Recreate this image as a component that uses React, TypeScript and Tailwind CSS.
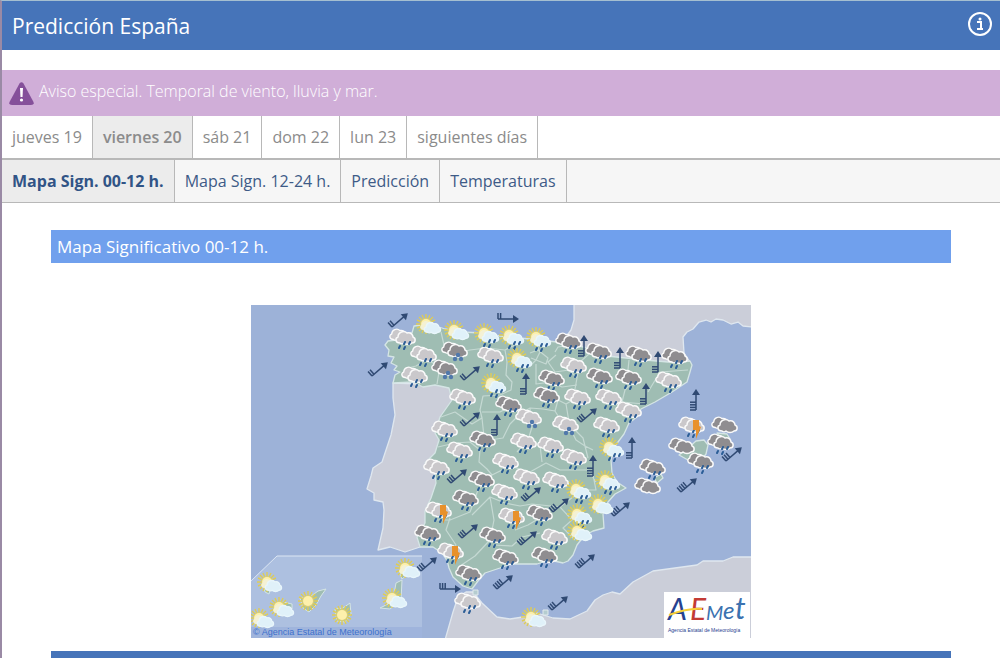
import React from 'react';
import { clsx } from 'clsx';

const DAYS = ['jueves 19', 'viernes 20', 'sáb 21', 'dom 22', 'lun 23', 'siguientes días'];
const VIEWS = ['Mapa Sign. 00-12 h.', 'Mapa Sign. 12-24 h.', 'Predicción', 'Temperaturas'];

type Kind = 'rain' | 'darkRain' | 'sunRain' | 'sunCloud' | 'dark' | 'snow' | 'darkSnow' | 'storm' | 'sun';

// x, y are the centre of the cloud
const SYMBOLS: [Kind, number, number][] = [
  ['rain', 402, 337], ['rain', 423, 354], ['rain', 414, 375], ['rain', 490, 355], ['rain', 573, 365],
  ['rain', 668, 380], ['rain', 462, 397], ['rain', 577, 397], ['rain', 608, 397], ['rain', 628, 410],
  ['rain', 606, 425], ['rain', 444, 429], ['rain', 459, 450], ['rain', 523, 441], ['rain', 550, 445],
  ['rain', 573, 457], ['rain', 505, 461], ['rain', 436, 467], ['rain', 526, 477], ['rain', 555, 480],
  ['rain', 504, 492], ['rain', 554, 537], ['rain', 467, 601],
  ['darkRain', 568, 341], ['darkRain', 598, 351], ['darkRain', 638, 354], ['darkRain', 674, 356],
  ['darkRain', 551, 378], ['darkRain', 599, 376], ['darkRain', 628, 377], ['darkRain', 508, 404],
  ['darkRain', 546, 395], ['darkRain', 482, 439], ['darkRain', 720, 442], ['darkRain', 700, 461],
  ['darkRain', 652, 467], ['darkRain', 481, 479], ['darkRain', 465, 498], ['darkRain', 539, 513],
  ['darkRain', 427, 533], ['darkRain', 492, 535], ['darkRain', 505, 557], ['darkRain', 544, 555],
  ['darkRain', 468, 573],
  ['sunRain', 487, 335], ['sunRain', 512, 337], ['sunRain', 539, 339], ['sunRain', 520, 360],
  ['sunRain', 494, 385], ['sunRain', 612, 449], ['sunRain', 579, 491], ['sunRain', 608, 482],
  ['sunRain', 580, 516],
  ['sunCloud', 429, 326], ['sunCloud', 457, 332], ['sunCloud', 601, 506], ['sunCloud', 580, 533],
  ['sunCloud', 534, 619], ['sunCloud', 270, 584], ['sunCloud', 282, 609], ['sunCloud', 262, 620],
  ['sunCloud', 408, 570], ['sunCloud', 395, 600],
  ['dark', 724, 425], ['dark', 681, 446], ['dark', 647, 486],
  ['snow', 528, 417], ['snow', 565, 424], ['darkSnow', 454, 350], ['darkSnow', 444, 368],
  ['storm', 691, 425], ['storm', 438, 510], ['storm', 511, 516], ['storm', 450, 551],
  ['sun', 308, 601], ['sun', 342, 615],
];

// tail x, tail y, rotation, number of barbs
const WINDS: [number, number, number, number][] = [
  [392, 327, -41, 2], [372, 376, -41, 2], [464, 380, -41, 2], [464, 426, -41, 2], [581, 422, -41, 3],
  [451, 483, -41, 3], [525, 501, -41, 3], [553, 512, -41, 3], [462, 538, -41, 3], [521, 545, -41, 3],
  [421, 571, -41, 3], [497, 589, -41, 4], [552, 610, -41, 3], [579, 568, -41, 4], [614, 516, -41, 4],
  [681, 492, -41, 4], [726, 461, -41, 3],
  [526, 394, -90, 3], [497, 435, -90, 3], [584, 356, -90, 3], [620, 368, -90, 3], [658, 372, -90, 3],
  [646, 404, -90, 3], [696, 410, -90, 4], [632, 458, -90, 3], [593, 476, -90, 4],
  [498, 319, 0, 2], [440, 589, 0, 3],
];

const REGIONS = [
  'M408 368 416 366 426 360 440 366 437 384M441 332 444 345 449 352 457 353 470 350 486 348 505 350 513 346 519 339',
  'M505 350 507 362 506 375 512 382 511 390 500 395 483 396 480 410 482 418 472 424 455 412 441 417',
  'M482 412 500 412 513 405M482 418 484 437 490 440 503 438 510 424 520 414 530 408 543 409 555 411 558 400 566 404 573 400 577 378 569 370 555 372 548 362 556 355',
  'M535 342 540 352 536 360 530 366M530 353 538 350 548 358 546 364 531 358M536 364V384L551 382 562 387 577 385',
  'M555 352 558 347 572 345M577 378 580 362 589 354M629 360 628 370 634 381 625 390 622 402 630 418',
  'M622 402 644 404M648 392 660 372 688 370M530 408 532 427 528 440 517 452',
  'M566 404 570 428 576 440 585 446 593 450M555 411 563 424 575 430 583 438 588 458',
  'M438 447 455 443 470 442 480 450 479 462 487 469 492 475 478 490 470 512 450 520 436 520',
  'M492 475 510 466 530 472 546 463 560 470 588 470 596 482M540 445 542 462',
  'M450 518 446 530 456 545 446 560M472 515 490 497 505 503 520 506 532 504 560 507 572 520 563 528 575 540',
  'M490 497 494 520 490 540 475 556 460 566M515 530 528 525 543 516M560 507 582 490 596 490 592 470',
  'M493 545 512 546 522 537 540 533M418 387 425 373',
];

function Cloud({ fill, stroke = '#fafafa' }: { fill: string; stroke?: string }) {
  return (
    <path
      d="M-5 5C-10 5-10 0-7-1-7-6-1-8 2-5 6-6 8-3 8-1 11 0 11 5 7 5 5 7 1 7-1 5-2 6-4 6-5 5z"
      fill={fill}
      stroke={stroke}
      strokeWidth="1.5"
      strokeLinejoin="round"
    />
  );
}

function Sun() {
  return (
    <g>
      <path
        d="M0-10V10M-10 0H10M-7-7 7 7M7-7-7 7M-4-9 4 9M4-9-4 9M-9-4 9 4M-9 4 9-4"
        stroke="#dfcc55"
        strokeWidth="1.4"
      />
      <circle r="6" fill="#d5cd7c" />
      <circle r="5" fill="#fdf0ac" />
    </g>
  );
}

function WeatherSymbol({ kind, x, y }: { kind: Kind; x: number; y: number }) {
  const sunny = kind === 'sunCloud' || kind === 'sunRain';
  const dark = kind === 'dark' || kind === 'darkRain' || kind === 'darkSnow';
  const wet = kind === 'rain' || kind === 'darkRain' || kind === 'sunRain' || kind === 'storm';
  const snowy = kind === 'snow' || kind === 'darkSnow';
  const fill = dark ? '#8f8d90' : '#cac8cb';

  if (kind === 'sun') {
    return (
      <g transform={`translate(${x} ${y})`}>
        <Sun />
      </g>
    );
  }

  return (
    <g transform={`translate(${x} ${y})`}>
      {sunny ? (
        <>
          <g transform="translate(-3 -2)"><Sun /></g>
          <g transform="translate(-2 0) scale(.7)"><Cloud fill="#f4f1d4" stroke="#f4f1d4" /></g>
          <g transform="translate(3 2) scale(.85)"><Cloud fill="#e0f1f9" stroke="#e9f6fb" /></g>
        </>
      ) : (
        <>
          <g transform="translate(-4 -2) scale(.9)"><Cloud fill={fill} /></g>
          <g transform="translate(3 1)"><Cloud fill={fill} /></g>
        </>
      )}
      {wet && (
        <path
          d="M3 5 2 7M8 5 7 7M-2 9-3 11M3 10 2 12"
          stroke="#2a5c96"
          strokeWidth="2"
          strokeLinecap="round"
        />
      )}
      {snowy && (
        <g fill="#5078ab">
          <circle cx="4" cy="5" r="2.2" />
          <circle cx="1" cy="9" r="2.2" />
          <circle cx="7" cy="9" r="2.2" />
        </g>
      )}
      {kind === 'storm' && <path d="M2-5H8V1L10 2 5 14 5 5H2z" fill="#e8912b" />}
    </g>
  );
}

function WindArrow({ x, y, angle, barbs }: { x: number; y: number; angle: number; barbs: number }) {
  return (
    <g transform={`translate(${x} ${y}) rotate(${angle})`} stroke="#304a73" fill="#304a73">
      <path d="M0 0H17" strokeWidth="1.5" />
      <path d="M15-4 21 0 15 4z" stroke="none" />
      {Array.from({ length: barbs }, (_, i) => (
        <path key={i} d={`M${i * 2.6} 0V-6`} strokeWidth="1.5" />
      ))}
    </g>
  );
}

function ForecastMap() {
  return (
    <svg viewBox="251 305 500 333" className="block w-full" role="img" aria-label="Mapa Significativo 00-12 h.">
      <rect x="251" y="305" width="500" height="333" fill="#9db2d8" />

      {/* France, Portugal and North Africa */}
      <g fill="#cbced9" stroke="#dfe7ef" strokeWidth="1.3" strokeLinejoin="round">
        <path d="M574 304 574 320 571 330 566 337 580 352 630 364 690 362 684 353 683 337 687 332 693 329 699 322 706 320 711 322 716 319 723 320 731 324 738 322 743 326 752 327V304z" />
        <path d="M393 383 393 398 395 415 391 435 387 447 382 462 373 468 371 476 367 489 374 493 374 500 383 502 384 510 383 528 378 550 390 547 405 552 420 547 450 470 454 385z" />
        <path d="M445 640 453 612 458 597 466 592 473 592 482 603 497 617 510 619 523 617 532 617 537 613 553 618 570 619 587 611 595 600 603 595 612 592 620 594 633 582 653 571 675 568 697 565 703 561 723 561 733 557 752 557V640z" />
      </g>

      {/* Spain and the Balearic Islands */}
      <g fill="#9fbdb3" stroke="#d5e5e5" strokeWidth="1.3" strokeLinejoin="round">
        <path d="M393 383 395 375 400 372 394 370 397 366 391 363 394 357 388 356 389 350 385 345 388 341 396 340 402 333 412 333 414 326 422 325 428 320 433 325 445 329 462 332 482 333 500 336 520 338 539 340 557 342 568 337 576 345 587 348 590 354 607 356 626 358 645 360 668 362 690 361 692 365 690 372 687 382 672 392 655 402 641 409 637 417 629 423 624 434 615 446 611 460 612 473 617 482 626 488 615 494 608 502 603 514 604 528 593 531 584 536 577 545 573 555 568 561 563 563 550 560 537 564 523 564 510 564 500 568 485 573 478 581 472 589 463 586 453 577 449 568 447 560 442 553 433 547 420 547 417 537 425 523 425 511 431 498 436 483 434 468 425 463 435 453 439 440 435 433 440 417 452 400 449 388 435 385 423 387 413 382z" />
        <path d="M679 455 687 449 696 441 704 440 708 445 706 454 700 462 688 460z" />
        <path d="M717 433 727 434 730 439 722 440z" />
        <path d="M654 478 661 474 663 478 657 483z" />
      </g>
      <path d={REGIONS.join('')} fill="none" stroke="#c5d9d3" strokeWidth="1.2" strokeLinejoin="round" />
      <g fill="#b5ccd0" stroke="#e0e9ec">
        <path d="M473 590h5v5h-5z" />
        <path d="M543 610h5v5h-5z" />
      </g>

      {/* Canary Islands inset */}
      <path d="M251 581 277 556H422V638H251z" fill="#adc0e0" />
      <path d="M251 581 277 556H422" fill="none" stroke="#dce6f3" />
      <g fill="#9fbdb3" stroke="#d5e5e5">
        <path d="M300 598 310 597 318 591 326 589 321 596 316 605 309 612 303 608z" />
        <path d="M335 609 343 608 350 603 351 614 345 622 337 621z" />
        <path d="M396 583 402 580 401 601 395 605 390 609 380 608 388 604 393 600z" />
        <path d="M283 602 292 604 292 609 286 614z" />
        <path d="M264 588 270 590 269 594 265 592z" />
        <path d="M400 574 410 565 413 570 402 579z" />
      </g>
      <rect x="251" y="627" width="171" height="11" fill="#9fb4dc" />

      {WINDS.map(([x, y, angle, barbs]) => (
        <WindArrow key={`${x}-${y}`} x={x} y={y} angle={angle} barbs={barbs} />
      ))}
      {SYMBOLS.map(([kind, x, y]) => (
        <WeatherSymbol key={`${x}-${y}`} kind={kind} x={x} y={y} />
      ))}

      <text x="253" y="635" fontSize="9" fill="#3d70cc" fontFamily="Liberation Sans, sans-serif">
        © Agencia Estatal de Meteorología
      </text>

      {/* AEMet logo */}
      <rect x="664" y="592" width="86" height="46" fill="#fff" />
      <g fontFamily="Lato, sans-serif" fontStyle="italic">
        <text x="668" y="620" fontSize="30" fill="#26418f">A</text>
        <text x="690" y="620" fontSize="30" fill="#c33b35">E</text>
        <text x="706" y="620" fontSize="20" fill="#3b72b0">M</text>
        <text x="723" y="619" fontSize="24" fill="#3b72b0">e</text>
        <text x="735" y="619" fontSize="30" fill="#3b72b0">t</text>
      </g>
      <path d="M669 615C680 611 690 608 702 609" fill="none" stroke="#f6cf38" strokeWidth="2" />
      <text x="668" y="632" fontSize="5" fill="#26418f" fontFamily="Liberation Sans, sans-serif">
        Agencia Estatal de Meteorología
      </text>
    </svg>
  );
}

export default function App() {
  return (
    <div className="min-h-screen border-l-2 border-t border-[#9a8aa5] border-t-[#a5bfd0] bg-white font-['Open_Sans',sans-serif]">
      <header className="flex h-[49px] items-center justify-between bg-[#4674b9] pl-[10px] pr-2 text-white">
        <h1 className="text-[21px] leading-7">Predicción España</h1>
        <button type="button" aria-label="Información" className="pb-[3px]">
          <svg viewBox="0 0 24 24" className="size-6" fill="none" stroke="currentColor">
            <circle cx="12" cy="12" r="11" strokeWidth="2" />
            <path d="M9 10h4v7M9 17h6" strokeWidth="2" />
            <circle cx="12" cy="7" r="1.5" fill="currentColor" stroke="none" />
          </svg>
        </button>
      </header>

      <a href="#aviso" className="mt-5 flex h-[46px] items-center gap-[5px] bg-[#d0aed8] pl-[7px] font-light text-white">
        <svg viewBox="0 0 25 23" className="w-[25px]" aria-hidden="true">
          <path d="M10.5 1.5Q12.5-1 14.5 1.5L24.5 20Q25.5 23 22 23H3Q-.5 23 .5 20z" fill="#85509a" />
          <path d="M11 6h3l-.5 9h-2z" fill="#fff" />
          <circle cx="12.5" cy="18" r="1.6" fill="#fff" />
        </svg>
        <span className="pb-1 text-base">Aviso especial. Temporal de viento, lluvia y mar.</span>
      </a>

      <nav aria-label="Día" className="flex h-11 border-b-2 border-[#b8b8b8] text-base text-[#8b8b8b]">
        {DAYS.map(day => (
          <a
            key={day}
            href="#dia"
            className={clsx(
              'flex items-center border-r border-[#b8b8b8] px-[10px]',
              day === 'viernes 20' && 'bg-[#ececec] font-semibold'
            )}
          >
            {day}
          </a>
        ))}
      </nav>

      <nav aria-label="Producto" className="flex h-[43px] border-b border-[#b8b8b8] bg-[#f6f6f6] text-base text-[#3e5b87]">
        {VIEWS.map((view, i) => (
          <a
            key={view}
            href="#producto"
            className={clsx(
              'flex items-center border-r border-[#b8b8b8] px-[10px]',
              i === 0 && 'bg-[#ececec] font-bold text-[#315486]'
            )}
          >
            {view}
          </a>
        ))}
      </nav>

      <main className="mx-[49px] mt-[27px]">
        <h2 className="bg-[#70a0ed] px-[6px] py-1 text-[17px] leading-[25px] text-white">Mapa Significativo 00-12 h.</h2>
        <figure className="mx-auto mt-[42px] max-w-[500px]">
          <ForecastMap />
        </figure>
        <div className="mt-[13px] h-[7px] bg-[#4674b9]" />
      </main>
    </div>
  );
}
